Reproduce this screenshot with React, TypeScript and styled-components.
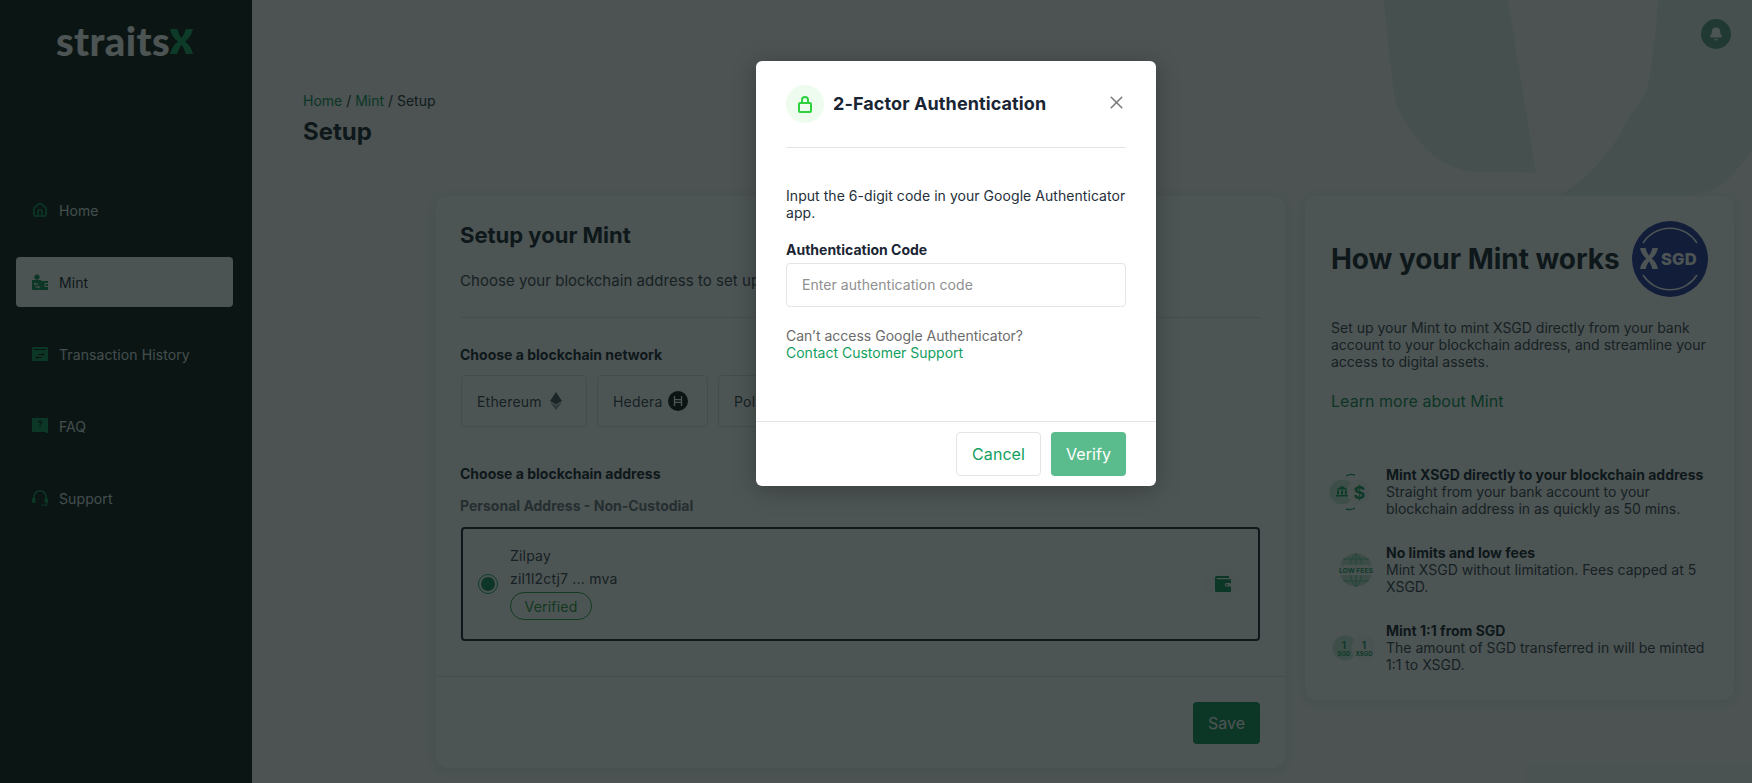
import React from "react";
import styled, { createGlobalStyle } from "styled-components";
import { House, Bell, X as CloseIcon } from "lucide-react";

const GREEN = "#0f8f52";

const Global = createGlobalStyle`
  html, body { margin: 0; padding: 0; height: 100%; }
  body { font-family: Inter, "Liberation Sans", sans-serif; color: #1a2730; overflow: hidden; letter-spacing: 0.05px; }
  * { box-sizing: border-box; }
`;

const Page = styled.div`
  position: relative;
  display: flex;
  width: 1752px;
  height: 783px;
  overflow: hidden;
  background: #f9f9f8;
`;
const Sidebar = styled.aside`
  flex: 0 0 252px;
  height: 783px;
  background: #081714;
  padding: 27px 19px 0 16px;
  display: flex;
  flex-direction: column;
`;
const Logo = styled.div`
  display: flex;
  align-items: center;
  justify-content: center;
  height: 28px;
  margin-bottom: 130px;
`;
const LogoText = styled.span`
  font-family: Lato, Inter, sans-serif;
  font-weight: 900;
  font-size: 40px;
  line-height: 28px;
  letter-spacing: 0.4px;
  color: #fff;
`;
const Nav = styled.nav`
  display: flex;
  flex-direction: column;
  gap: 22px;
`;
const NavItem = styled.div<{ $active?: boolean }>`
  display: flex;
  align-items: center;
  gap: 11px;
  height: 50px;
  padding-left: 16px;
  border-radius: 4px;
  font-size: 14px;
  letter-spacing: 0.1px;
  color: ${(p) => (p.$active ? "#16242c" : "#dfe2e2")};
  background: ${(p) => (p.$active ? "#fbfbfb" : "transparent")};
  svg { flex: none; color: ${GREEN}; }
`;
const Main = styled.main`
  flex: 1;
  min-width: 0;
  padding: 0 18px 0 51px;
  display: flex;
  flex-direction: column;
  position: relative;
`;
const Decor = styled.svg`
  position: absolute;
  top: 0;
  right: 0;
  pointer-events: none;
`;
const TopBar = styled.div`
  display: flex;
  justify-content: flex-end;
  padding: 19px 3px 0 0;
  height: 91px;
  position: relative;
`;
const BellButton = styled.div`
  width: 30px;
  height: 30px;
  border-radius: 50%;
  background: #5f9c86;
  color: #fff;
  display: flex;
  align-items: center;
  justify-content: center;
`;
const Crumbs = styled.div`
  font-size: 14px;
  line-height: 19px;
  letter-spacing: 0;
  color: #243038;
  position: relative;
`;
const CrumbLink = styled.span`
  color: ${GREEN};
`;
const PageTitle = styled.h1`
  margin: 7px 0 0;
  font-size: 24px;
  line-height: 29px;
  font-weight: 700;
  letter-spacing: 0;
  color: #16242c;
  position: relative;
`;
const Columns = styled.div`
  display: flex;
  gap: 20px;
  margin: 50px 0 0 133px;
  align-items: flex-start;
  position: relative;
`;
const Card = styled.section`
  background: #fff;
  border-radius: 12px;
  box-shadow: 0 2px 12px rgba(20, 60, 40, 0.08);
`;
const SetupCard = styled(Card)`
  flex: 0 0 849px;
  height: 572px;
  padding: 25px 24px 0;
  display: flex;
  flex-direction: column;
`;
const SetupTitle = styled.h2`
  margin: 0;
  font-size: 22px;
  line-height: 28px;
  font-weight: 700;
  letter-spacing: 0;
  color: #16242c;
`;
const SetupLead = styled.p`
  margin: 22px 0 0;
  font-size: 15px;
  line-height: 20px;
  color: #37434b;
`;
const Rule = styled.hr`
  border: 0;
  border-top: 1px solid #e4e7e6;
  margin: 26px 0 0;
`;
const SectionLabel = styled.div`
  font-size: 14px;
  line-height: 17px;
  font-weight: 700;
  letter-spacing: 0;
  color: #16242c;
`;
const NetworkLabel = styled(SectionLabel)`
  margin-top: 28px;
`;
const NetworkRow = styled.div`
  display: flex;
  gap: 10px;
  margin: 12px 0 38px 1px;
`;
const NetworkChip = styled.div<{ $w: number }>`
  flex: 0 0 ${(p) => p.$w}px;
  height: 52px;
  border: 1px solid #dfe2e1;
  border-radius: 4px;
  display: flex;
  align-items: center;
  gap: 5px;
  padding-left: 15px;
  font-size: 14px;
  letter-spacing: 0.2px;
  color: #37434b;
`;
const GroupLabel = styled.div`
  margin-top: 15px;
  font-size: 14px;
  line-height: 17px;
  font-weight: 700;
  letter-spacing: 0;
  color: #6b7479;
`;
const AddressBox = styled.div`
  margin: 13px 0 0 1px;
  width: 799px;
  height: 114px;
  border: 2px solid #16242c;
  border-radius: 4px;
  display: flex;
  align-items: center;
  padding: 0 17px 0 15px;
`;
const Radio = styled.div`
  flex: none;
  width: 20px;
  height: 20px;
  border-radius: 50%;
  border: 1px solid #17a05d;
  padding: 2px;
  &::after {
    content: "";
    display: block;
    width: 14px;
    height: 14px;
    border-radius: 50%;
    background: ${GREEN};
  }
`;
const AddressInfo = styled.div`
  margin-left: 12px;
  flex: 1;
  display: flex;
  flex-direction: column;
  align-items: flex-start;
  padding-bottom: 2px;
  font-size: 14px;
  letter-spacing: 0.2px;
  color: #37434b;
`;
const AddressName = styled.div`
  line-height: 20px;
`;
const AddressValue = styled.div`
  margin-top: 3px;
  line-height: 20px;
`;
const VerifiedPill = styled.div`
  margin-top: 3px;
  height: 28px;
  width: 82px;
  border: 1px solid #2aa13d;
  border-radius: 14px;
  display: flex;
  align-items: center;
  justify-content: center;
  color: #2a9a3c;
`;
const WalletBadge = styled.div`
  flex: none;
  width: 36px;
  height: 36px;
  border-radius: 50%;
  background: #f8fbf9;
  display: flex;
  align-items: center;
  justify-content: center;
`;
const SetupFooter = styled.div`
  margin: 35px -24px 0;
  border-top: 1px solid #e4e7e6;
  padding: 25px 25px 0 0;
  display: flex;
  justify-content: flex-end;
`;
const SaveButton = styled.div`
  width: 67px;
  height: 42px;
  border-radius: 4px;
  background: ${GREEN};
  color: #fff;
  font-size: 16px;
  display: flex;
  align-items: center;
  justify-content: center;
`;
const InfoCard = styled(Card)`
  flex: 0 0 429px;
  height: 504px;
  padding: 25px 25px 0 26px;
`;
const InfoHead = styled.div`
  display: flex;
  align-items: center;
  justify-content: space-between;
  padding-right: 1px;
`;
const InfoTitle = styled.h2`
  margin: 0;
  font-size: 28px;
  line-height: 34px;
  font-weight: 700;
  letter-spacing: -0.05px;
  color: #16242c;
`;
const InfoText = styled.p`
  margin: 22px 0 0;
  font-size: 14px;
  line-height: 17px;
  letter-spacing: 0;
  color: #37434b;
`;
const LearnLink = styled.div`
  margin-top: 21px;
  font-size: 16px;
  line-height: 20px;
  color: ${GREEN};
`;
const FeatureList = styled.div`
  margin-top: 55px;
  display: flex;
  flex-direction: column;
  gap: 27px;
`;
const Feature = styled.div`
  display: flex;
  align-items: center;
  gap: 11px;
`;
const FeatureIcon = styled.svg`
  flex: none;
  margin-left: -2px;
  text {
    font-family: Inter, sans-serif;
    font-weight: 700;
    fill: #17a05d;
    letter-spacing: 0;
  }
`;
const FeatureBody = styled.div`
  font-size: 14px;
  line-height: 17px;
  letter-spacing: 0;
  color: #37434b;
`;
const FeatureTitle = styled.div`
  font-weight: 700;
  color: #16242c;
`;
const Overlay = styled.div`
  position: absolute;
  inset: 0;
  background: rgba(11, 21, 20, 0.73);
  display: flex;
  justify-content: center;
  align-items: flex-start;
  padding: 61px 0 0 160px;
`;
const Modal = styled.div`
  width: 400px;
  height: 425px;
  background: #fff;
  border-radius: 6px;
  box-shadow: 0 4px 24px rgba(0, 0, 0, 0.25);
  display: flex;
  flex-direction: column;
`;
const ModalHead = styled.div`
  margin: 24px 30px 0;
  padding-bottom: 24px;
  border-bottom: 1px solid #e4e4e4;
  display: flex;
  align-items: center;
  gap: 9px;
  color: #7a7a7a;
`;
const LockBadge = styled.div`
  flex: none;
  width: 38px;
  height: 38px;
  border-radius: 50%;
  background: #edfcee;
  display: flex;
  align-items: center;
  justify-content: center;
`;
const ModalTitle = styled.h3`
  flex: 1;
  margin: 0;
  font-size: 18px;
  line-height: 22px;
  font-weight: 700;
  letter-spacing: 0.1px;
  color: #1a2534;
`;
const CloseSlot = styled.div`
  display: flex;
  margin: -3px -1px 0 0;
`;
const ModalBody = styled.div`
  flex: 1;
  padding: 40px 30px 0;
`;
const ModalText = styled.p`
  margin: -1px 0 0;
  font-size: 14px;
  line-height: 17px;
  color: #25303a;
`;
const FieldLabel = styled.div`
  margin-top: 20px;
  font-size: 14px;
  line-height: 17px;
  font-weight: 700;
  letter-spacing: 0;
  color: #1a2534;
`;
const CodeInput = styled.input`
  display: block;
  width: 340px;
  height: 44px;
  margin-top: 5px;
  border: 1px solid #e4e4e4;
  border-radius: 4px;
  padding: 0 15px 2px;
  font: 14px Inter, sans-serif;
  letter-spacing: 0.05px;
  outline: none;
  &::placeholder { color: #8f8f8f; opacity: 1; }
`;
const HelpText = styled.div`
  margin-top: 20px;
  font-size: 14px;
  line-height: 17px;
  letter-spacing: 0;
  color: #6b6b6b;
`;
const HelpLink = styled.div`
  color: #12a05e;
`;
const ModalFoot = styled.div`
  height: 65px;
  border-top: 1px solid #e4e4e4;
  padding: 10px 30px 0;
  display: flex;
  justify-content: flex-end;
  gap: 10px;
`;
const FootButton = styled.div<{ $primary?: boolean; $w: number }>`
  width: ${(p) => p.$w}px;
  height: 44px;
  border-radius: 4px;
  display: flex;
  align-items: center;
  justify-content: center;
  font-size: 16px;
  color: ${(p) => (p.$primary ? "#fff" : "#12a05e")};
  background: ${(p) => (p.$primary ? "#5abc8d" : "#fff")};
  border: ${(p) => (p.$primary ? "0" : "1px solid #e4e4e4")};
`;

const X_PATH = "M0 0h9.500c1.200 4 3 7.500 5.500 10 2.500-2.500 4.300-6 5.500-10H30c-1.800 6.500-5.500 11-10.500 14 5 3 8.700 7.500 10.500 14h-9.500c-1.200-4-3-7.500-5.500-10-2.500 2.500-4.300 6-5.500 10H0c1.800-6.500 5.500-11 10.500-14C5.500 11 1.800 6.500 0 0z";

const LogoMark = () => (
  <svg width="23" height="25" viewBox="0 0 30 28" preserveAspectRatio="none" style={{ flex: "none" }}>
    <path fill="#17a05d" d={X_PATH} />
  </svg>
);
const LockGlyph = () => (
  <svg width="16" height="17" viewBox="0 0 16 17" fill="none" stroke="#2fd13f" strokeWidth="2">
    <rect x="2" y="7" width="12" height="9" rx="1" />
    <path d="M5 7V4a3 3 0 0 1 6 0v3" />
  </svg>
);
const MintIcon = () => (
  <svg width="16" height="16" viewBox="0 0 16 16" style={{ flex: "none" }}>
    <path fill={GREEN} d="M5 0.500a2.600 2.600 0 0 1 0 5.200 2.600 2.600 0 0 1 0-5.200zM0 6h9v1H16v9H1.500A1.500 1.500 0 0 1 0 14.500z" />
    <path stroke="#fbfbfb" strokeWidth="1" fill="none" d="M2 10h4M4 9l-1.500 1L4 11M3 13h4M6 12l1.500 1L6 14M16 9.500h-3v3h3" />
  </svg>
);
const HistoryIcon = () => (
  <svg width="16" height="16" viewBox="0 0 16 16" style={{ flex: "none" }}>
    <path fill={GREEN} d="M1 1h14a1 1 0 0 1 1 1v12a1 1 0 0 1-1 1H1a1 1 0 0 1-1-1V2a1 1 0 0 1 1-1z" />
    <path stroke="#081714" strokeWidth="1" fill="none" d="M1.500 3.500h13M4 11.500h6M5.500 10l-1.500 1.500L5.500 13M12 8.500H6M10.500 7l1.500 1.500L10.500 10" />
  </svg>
);
const FaqIcon = () => (
  <svg width="16" height="16" viewBox="0 0 16 16" style={{ flex: "none" }}>
    <path fill={GREEN} d="M0 0h16v15.500L13 14H0z" />
    <path stroke="#081714" strokeWidth="1.200" fill="none" d="M6.600 4.600a1.500 1.500 0 1 1 2 1.500c-.5.3-.6.6-.6 1.200" />
    <circle cx="8" cy="9" r=".7" fill="#081714" />
  </svg>
);
const SupportIcon = () => (
  <svg width="16" height="16" viewBox="0 0 16 16" fill="none" style={{ flex: "none" }}>
    <path stroke={GREEN} strokeWidth="1.600" d="M1.800 9V7a6.200 6.200 0 0 1 12.400 0v2" />
    <rect x="0" y="8" width="3.500" height="5" rx="1.200" fill={GREEN} />
    <rect x="12.500" y="8" width="3.500" height="5" rx="1.200" fill={GREEN} />
    <path stroke={GREEN} strokeWidth="1.200" d="M15 13v1a1.200 1.200 0 0 1-1.200 1.200H9" />
  </svg>
);
const EthIcon = () => (
  <svg width="12" height="18" viewBox="0 0 12 18" style={{ flex: "none", marginLeft: 3 }}>
    <path fill="#4a5560" d="M6 0l6 9-6 3.400L0 9z" />
    <path fill="#8b939a" d="M6 13.600L12 10l-6 8-6-8z" />
  </svg>
);
const HederaIcon = () => (
  <svg width="20" height="20" viewBox="0 0 20 20" style={{ flex: "none" }}>
    <circle cx="10" cy="10" r="10" fill="#111" />
    <path stroke="#fff" strokeWidth="1.300" fill="none" d="M6.500 5v10M13.500 5v10M6.500 8.600h7M6.500 11.400h7" />
  </svg>
);
const WalletIcon = () => (
  <svg width="16" height="16" viewBox="0 0 16 16">
    <path fill={GREEN} d="M1.500 0H14v2H2.200a.6.6 0 0 0 0 1.300H16V16H1.500A1.500 1.500 0 0 1 0 14.500v-13A1.500 1.500 0 0 1 1.500 0z" />
    <rect x="10" y="7" width="6" height="3.600" rx="1.200" fill="#f8fbf9" />
    <circle cx="12" cy="8.800" r=".9" fill={GREEN} />
  </svg>
);
const XsgdLogo = () => (
  <svg width="76" height="76" viewBox="0 0 76 76" style={{ flex: "none" }}>
    <circle cx="38" cy="38" r="38" fill="#2536a0" />
    <path stroke="#fff" strokeWidth="1.400" fill="none" d="M11 22A32 32 0 0 1 65 22M11 54A32 32 0 0 0 65 54" />
    <path fill="#fff" transform="translate(8 27) scale(.6 .75)" d={X_PATH} />
    <text x="29" y="44" fontFamily="Inter, sans-serif" fontWeight="800" fontSize="16.500" letterSpacing="0.2" fill="#fff">SGD</text>
  </svg>
);

const Decoration = () => (
  <Decor width="500" height="783" viewBox="1252 0 500 783">
    <path fill="#e6f5ec" d="M1384 0C1388 45 1392 80 1395 100 1401 117 1407 126 1414 133 1420 143 1428 151 1435 157 1447 165 1460 170 1472 172L1536 173 1508 0z" />
    <path fill="#e6f5ec" d="M1658 0C1656 35 1652 65 1647 90 1642 100 1636 109 1629 117 1618 140 1606 157 1592 170 1582 180 1572 188 1560 195L1691 195C1708 193 1718 188 1727 180 1735 172 1744 162 1752 150V0z" />
  </Decor>
);

export default function App() {
  return (
    <Page>
      <Global />
      <Sidebar>
        <Logo>
          <LogoText>straits</LogoText>
          <LogoMark />
        </Logo>
        <Nav>
          <NavItem><House size={16} strokeWidth={2.6} />Home</NavItem>
          <NavItem $active><MintIcon />Mint</NavItem>
          <NavItem><HistoryIcon />Transaction History</NavItem>
          <NavItem><FaqIcon />FAQ</NavItem>
          <NavItem><SupportIcon />Support</NavItem>
        </Nav>
      </Sidebar>
      <Main>
        <Decoration />
        <TopBar>
          <BellButton><Bell size={14} fill="currentColor" /></BellButton>
        </TopBar>
        <Crumbs>
          <CrumbLink>Home</CrumbLink> / <CrumbLink>Mint</CrumbLink> / Setup
        </Crumbs>
        <PageTitle>Setup</PageTitle>
        <Columns>
          <SetupCard>
            <SetupTitle>Setup your Mint</SetupTitle>
            <SetupLead>Choose your blockchain address to set up your Mint.</SetupLead>
            <Rule />
            <NetworkLabel>Choose a blockchain network</NetworkLabel>
            <NetworkRow>
              <NetworkChip $w={126}>Ethereum<EthIcon /></NetworkChip>
              <NetworkChip $w={111}>Hedera<HederaIcon /></NetworkChip>
              <NetworkChip $w={120}>Polygon</NetworkChip>
            </NetworkRow>
            <SectionLabel>Choose a blockchain address</SectionLabel>
            <GroupLabel>Personal Address - Non-Custodial</GroupLabel>
            <AddressBox>
              <Radio />
              <AddressInfo>
                <AddressName>Zilpay</AddressName>
                <AddressValue>zil1l2ctj7 ... mva</AddressValue>
                <VerifiedPill>Verified</VerifiedPill>
              </AddressInfo>
              <WalletBadge><WalletIcon /></WalletBadge>
            </AddressBox>
            <SetupFooter>
              <SaveButton>Save</SaveButton>
            </SetupFooter>
          </SetupCard>
          <InfoCard>
            <InfoHead>
              <InfoTitle>How your Mint works</InfoTitle>
              <XsgdLogo />
            </InfoHead>
            <InfoText>
              Set up your Mint to mint XSGD directly from your bank account to your blockchain address, and streamline your access to digital assets.
            </InfoText>
            <LearnLink>Learn more about Mint</LearnLink>
            <FeatureList>
              <Feature>
                <FeatureIcon width="46" height="40" viewBox="0 0 46 40">
                  <circle cx="13" cy="20" r="12.500" fill="#c9ecd9" />
                  <circle cx="30" cy="20" r="12" fill="#f5f7f6" />
                  <path fill="#17a05d" d="M13 14l6 3.500H7zM8 18.500h2v4H8zM12 18.500h2v4h-2zM16 18.500h2v4h-2zM7 23h12v1.500H7z" />
                  <text x="24.500" y="26.500" fontSize="18">$</text>
                  <path stroke="#17a05d" strokeWidth="1.400" fill="none" d="M17 4c3-2 6-2 9-1M26 36c-3 2-6 2-9 1" />
                </FeatureIcon>
                <FeatureBody>
                  <FeatureTitle>Mint XSGD directly to your blockchain address</FeatureTitle>
                  Straight from your bank account to your blockchain address in as quickly as 50 mins.
                </FeatureBody>
              </Feature>
              <Feature>
                <FeatureIcon width="46" height="40" viewBox="0 0 46 40">
                  <circle cx="27" cy="20" r="16.500" fill="#bfe6d2" />
                  <path stroke="#17a05d" strokeWidth=".5" fill="none" d="M27 3.500v33M14 9h26M14 31h26M27 3.500C19 8 19 32 27 36.500M27 3.500c8 4.500 8 28.500 0 33" />
                  <rect x="10" y="15" width="34" height="10" rx="2" fill="#f5f7f6" />
                  <text x="27" y="22.500" fontSize="6.800" textAnchor="middle">LOW FEES</text>
                </FeatureIcon>
                <FeatureBody>
                  <FeatureTitle>No limits and low fees</FeatureTitle>
                  Mint XSGD without limitation. Fees capped at 5 XSGD.
                </FeatureBody>
              </Feature>
              <Feature>
                <FeatureIcon width="46" height="40" viewBox="0 0 46 40">
                  <circle cx="16" cy="20" r="12.500" fill="#c9ecd9" />
                  <circle cx="35" cy="20" r="12.500" fill="#f5f7f6" />
                  <text x="15" y="21" fontSize="10" textAnchor="middle">1</text>
                  <text x="15" y="28" fontSize="6" textAnchor="middle">SGD</text>
                  <text x="35" y="21" fontSize="10" textAnchor="middle">1</text>
                  <text x="35" y="28" fontSize="6" textAnchor="middle">XSGD</text>
                </FeatureIcon>
                <FeatureBody>
                  <FeatureTitle>Mint 1:1 from SGD</FeatureTitle>
                  The amount of SGD transferred in will be minted 1:1 to XSGD.
                </FeatureBody>
              </Feature>
            </FeatureList>
          </InfoCard>
        </Columns>
      </Main>
      <Overlay>
        <Modal>
          <ModalHead>
            <LockBadge><LockGlyph /></LockBadge>
            <ModalTitle>2-Factor Authentication</ModalTitle>
            <CloseSlot><CloseIcon size={21} strokeWidth={1.8} /></CloseSlot>
          </ModalHead>
          <ModalBody>
            <ModalText>Input the 6-digit code in your Google Authenticator app.</ModalText>
            <FieldLabel>Authentication Code</FieldLabel>
            <CodeInput placeholder="Enter authentication code" />
            <HelpText>
              Can’t access Google Authenticator?
              <HelpLink>Contact Customer Support</HelpLink>
            </HelpText>
          </ModalBody>
          <ModalFoot>
            <FootButton $w={85}>Cancel</FootButton>
            <FootButton $w={75} $primary>Verify</FootButton>
          </ModalFoot>
        </Modal>
      </Overlay>
    </Page>
  );
}
